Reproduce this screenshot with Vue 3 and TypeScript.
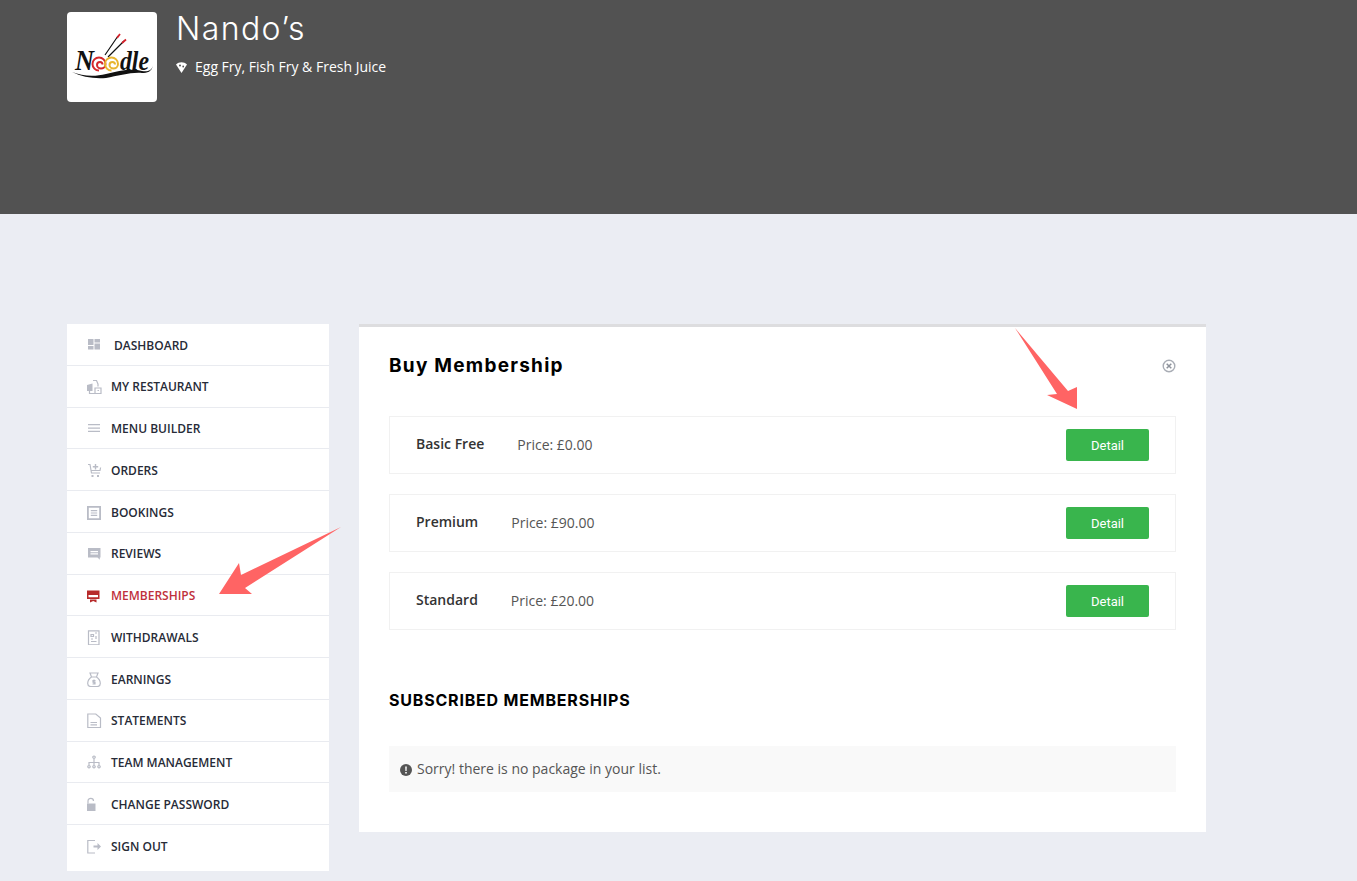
<script setup lang="ts">
interface MenuItem {
  label: string
  solid?: string[]
  line?: string[]
  active?: boolean
  indent?: boolean
}

const menu: MenuItem[] = [
  { label: 'Dashboard', indent: true, solid: ['M1 1h5.500v6H1zM7.500 1H13v3.500H7.500zM1 8h5.500v3.500H1zM7.500 5.500H13v6H7.500z'] },
  { label: 'My Restaurant', solid: ['M0 6l5.500-1.500V12H0z'], line: ['M6 1.500h3.500l1.500 3.500v2.500M2.500 12v2.500h11.500V9H8v5.500M10.500 11.500h1.500'] },
  { label: 'Menu Builder', solid: ['M1 3h12v1.300H1zM1 6.400h12v1.300H1zM1 9.800h12v1.300H1z'] },
  { label: 'Orders', solid: ['M4.500 12h2v2h-2zM10 12h2v2h-2z', 'M7.800 1h1.400v2h2v1.400h-2v2H7.800v-2h-2V3h2z'], line: ['M1 1.500h2l1.500 8.500h8.500M4 7.500h9l.6-3'] },
  { label: 'Bookings', solid: ['M0 1h14v14H0zM1.800 2.800v10.400h10.400V2.800zM3.800 5h6.400v1.200H3.800zM3.800 7.400h6.400v1.200H3.800zM3.800 9.800h6.400V11H3.800z'] },
  { label: 'Reviews', solid: ['M1 2h12.500v9.500h-.7v2.200l-2.300-2.200H1zM3.500 5v1.200h7.500V5zM3.500 7.300v1.200h7.500V7.300z'] },
  { label: 'Memberships', active: true, solid: ['M0 2.500h12.500v8.500H0zM1.500 7v2.200h9.500V7zM3 11.500h6.500v3L6.200 13 3 14.500z'] },
  { label: 'Withdrawals', line: ['M1.500 .8h10.500v14H1.500zM4 4.500h2.500v2H4zM4 9h2M4 11.500h5.500M9 6v3M8 3h2'] },
  { label: 'Earnings', line: ['M3 1h8l-1.500 4h-5zM4.500 5C1.500 7 .7 9 .7 11.500c0 2 1 3 3 3h6.600c2 0 3-1 3-3 0-2.500-.8-4.500-3.800-6.500M7 7.500v5M8.500 8.500H6v1.700h2V12H5.500'] },
  { label: 'Statements', line: ['M.8 1h8l4.700 4v9.500H.8zM3.500 9.500h6.500M3.500 11.800h6.500'] },
  { label: 'Team Management', line: ['M7 3.500V7M2 10V7.500h10V10M7 7v3M7 1a1.200 1.200 0 1 0 .01 0M2 10.500a1.200 1.200 0 1 0 .01 0M7 10.500a1.200 1.200 0 1 0 .01 0M12 10.500a1.200 1.200 0 1 0 .01 0'] },
  { label: 'Change Password', solid: ['M-1 6.500h9.500V14H-1z'], line: ['M1 6.500V4c0-3.500 5.500-3.500 5.500 0'] },
  { label: 'Sign Out', solid: ['M6.500 6.500h4V4l3.500 3.500-3.500 3.500V8.500h-4z'], line: ['M8 1.500H.8v12.500H8'] },
]

const plans = [
  { name: 'Basic Free', price: '£0.00' },
  { name: 'Premium', price: '£90.00' },
  { name: 'Standard', price: '£20.00' },
]
</script>

<template>
  <div class="page">
    <header class="banner">
      <div class="logo">
        <svg width="90" height="90" viewBox="0 0 90 90">
          <path d="M38 43L51 24M41 45L57 29" stroke="#111" stroke-width="1.200" fill="none" />
          <path d="M50 26l3-4M55 31l4-3.500" stroke="#d4202a" stroke-width="1.800" fill="none" />
          <text x="8" y="58" class="logo-text" font-size="29" textLength="19" lengthAdjust="spacingAndGlyphs">N</text>
          <path d="M32 58.500a6.500 6.500 0 1 1 6.500-6.500c0 3-2.500 4.500-4.500 4.500s-4-1.500-4-3.500 1-3 3-3 2.500 1 2.500 2.500" stroke="#d4282c" stroke-width="2" fill="none" />
          <path d="M44.500 58.500a6.500 6.500 0 1 1 6.500-6.500c0 3-2.500 4.500-4.500 4.500s-4-1.500-4-3.500 1-3 3-3 2.500 1 2.500 2.500" stroke="#e8b52f" stroke-width="2" fill="none" />
          <text x="53" y="58" class="logo-text" font-size="28" textLength="29" lengthAdjust="spacingAndGlyphs">dle</text>
          <path d="M5 60c10 4 22 5 34 2 12-3 26-6 36-3 5 1 10 0 11-6-1 7-6 8-11 8-11-1-24 3-36 5-12 1-24-1-34-6z" fill="#111" />
        </svg>
      </div>
      <div class="brand">
        <h1>Nando’s</h1>
        <p>
          <svg width="11" height="12" viewBox="0 0 11 12">
            <path d="M0 3.500C3 .5 8 .5 11 3.500L5.500 12z" fill="#fff" />
            <circle cx="4" cy="4.500" r="1" fill="#535353" />
            <circle cx="7.200" cy="5.500" r=".9" fill="#535353" />
          </svg>
          Egg Fry, Fish Fry &amp; Fresh Juice
        </p>
      </div>
    </header>

    <div class="content">
      <nav class="side">
        <a
          v-for="item in menu"
          :key="item.label"
          class="side-item"
          :class="{ active: item.active, indent: item.indent }"
        >
          <svg class="side-icon" width="15" height="15" viewBox="0 0 15 15">
            <path v-for="d in item.solid" :key="d" :d="d" class="solid" />
            <path v-for="d in item.line" :key="d" :d="d" class="line" />
          </svg>
          {{ item.label }}
        </a>
      </nav>

      <main class="panel">
        <div class="panel-head">
          <h2>Buy Membership</h2>
          <svg class="close" width="14" height="14" viewBox="0 0 14 14">
            <circle cx="7" cy="7" r="5.800" fill="none" stroke="#a9adb5" stroke-width="1.400" />
            <path d="M4.700 4.700l4.600 4.600M9.300 4.700l-4.600 4.600" stroke="#8d929b" stroke-width="1.500" />
          </svg>
        </div>

        <div class="plans">
          <div v-for="plan in plans" :key="plan.name" class="plan">
            <strong>{{ plan.name }}</strong>
            <span class="price">Price: {{ plan.price }}</span>
            <button class="detail" type="button">Detail</button>
          </div>
        </div>

        <h3>Subscribed Memberships</h3>

        <div class="notice">
          <svg width="12" height="12" viewBox="0 0 12 12">
            <circle cx="6" cy="6" r="6" fill="#555" />
            <path d="M5.200 2.500h1.600l-.2 4.500H5.400zM5.200 8h1.600v1.500H5.200z" fill="#fff" />
          </svg>
          Sorry! there is no package in your list.
        </div>
      </main>
    </div>

    <svg class="arrow arrow-side" width="124" height="70" viewBox="219 526 124 70">
      <path d="M341 527L245 588 252 594H219L239 563 241 575z" fill="#ff6464" />
    </svg>
    <svg class="arrow arrow-top" width="66" height="84" viewBox="1014 327 66 84">
      <path d="M1015 328L1068 391 1077 387V409L1047 395 1057 394z" fill="#ff6464" />
    </svg>
  </div>
</template>

<style scoped>
.page {
  position: relative;
  min-height: 881px;
  background: #ebedf3;
  font-family: "Open Sans", "Liberation Sans", sans-serif;
  overflow: hidden;
}

.banner {
  display: flex;
  height: 214px;
  box-sizing: border-box;
  padding: 12px 0 0 67px;
  background: #525252;
  color: #fff;
}

.logo {
  width: 90px;
  height: 90px;
  background: #fff;
  border-radius: 4px;
}

.logo svg {
  display: block;
}

.logo-text {
  font-family: "Liberation Serif", serif;
  font-weight: 700;
  font-style: italic;
  fill: #111;
}

.brand {
  margin-left: 19px;
}

.brand h1 {
  margin: 0;
  font-family: Inter, sans-serif;
  font-size: 32px;
  font-weight: 300;
  letter-spacing: 1.4px;
  line-height: 34px;
}

.brand p {
  display: flex;
  align-items: center;
  gap: 8px;
  margin: 11px 0 0;
  font-size: 14px;
  line-height: 20px;
}

.content {
  display: flex;
  gap: 30px;
  align-items: flex-start;
  padding: 110px 0 10px 67px;
}

.side {
  display: flex;
  flex-direction: column;
  width: 262px;
  background: #fff;
}

.side-item {
  display: flex;
  align-items: center;
  height: 41.75px;
  box-sizing: border-box;
  padding: 1.5px 0 0 20px;
  border-bottom: 1px solid #e9ebf0;
  color: #272b37;
  font-size: 12px;
  font-weight: 600;
  text-transform: uppercase;
}

.side-item:last-child {
  height: 46px;
  padding: 0 0 3px 20px;
  border-bottom: 0;
}

.side-icon {
  flex: none;
  margin-right: 9px;
}

.side-item.indent .side-icon {
  margin-right: 12px;
}

.solid {
  fill: #b9bcc6;
  fill-rule: evenodd;
}

.line {
  fill: none;
  stroke: #b9bcc6;
  stroke-width: 1.200;
}

.side-item.active {
  color: #c0303c;
}

.active .solid {
  fill: #b72b2b;
}

.panel {
  width: 847px;
  box-sizing: border-box;
  padding: 24px 30px 40px;
  border-top: 3px solid #dddddf;
  background: #fff;
}

.panel-head {
  display: flex;
  align-items: center;
  justify-content: space-between;
  height: 28px;
  margin-bottom: 37px;
}

.panel-head h2 {
  margin: 0;
  color: #000;
  font-family: Inter, sans-serif;
  font-size: 19px;
  font-weight: 700;
  letter-spacing: 1.25px;
}

.close {
  margin-top: 2px;
}

.plans {
  display: flex;
  flex-direction: column;
  gap: 20px;
}

.plan {
  display: flex;
  align-items: center;
  height: 58px;
  box-sizing: border-box;
  padding: 0 26px;
  border: 1px solid #f1f1f1;
}

.plan strong {
  margin: 0 33px 4px 0;
  color: #333;
  font-size: 14px;
  font-weight: 600;
}

.price {
  margin-bottom: 2px;
  color: #555;
  font-size: 14px;
}

.detail {
  width: 83px;
  height: 32px;
  margin-left: auto;
  padding: 0;
  border: 0;
  border-radius: 2px;
  background: #39b54d;
  color: #fff;
  font-family: Roboto, sans-serif;
  font-size: 13px;
}

.panel h3 {
  margin: 60px 0 0;
  color: #000;
  font-family: Inter, sans-serif;
  font-size: 16px;
  font-weight: 700;
  letter-spacing: 0.8px;
  line-height: 20px;
  text-transform: uppercase;
}

.notice {
  display: flex;
  align-items: center;
  gap: 5px;
  height: 46px;
  box-sizing: border-box;
  margin-top: 36px;
  padding: 0 0 2px 11px;
  background: #f9f9f9;
  color: #555;
  font-size: 14px;
}

.notice svg {
  margin-top: 4px;
}

.arrow {
  position: absolute;
  pointer-events: none;
}

.arrow-side {
  left: 219px;
  top: 526px;
}

.arrow-top {
  left: 1014px;
  top: 327px;
}
</style>

<style>
html,
body {
  margin: 0;
  background: #ebedf3;
}
</style>
